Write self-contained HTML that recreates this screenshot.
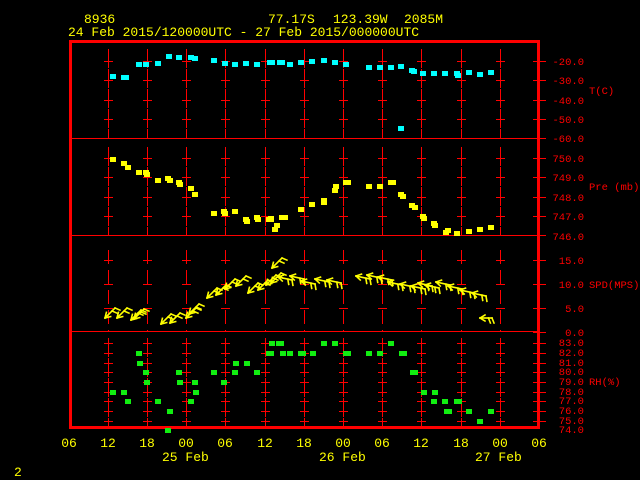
<!DOCTYPE html>
<html><head><meta charset="utf-8"><style>
html,body{margin:0;padding:0;background:#000;width:640px;height:480px;overflow:hidden}
svg{display:block}
text{font-family:"Liberation Mono",monospace}
.y{fill:#ffff00;font-size:13px}
.r{fill:#ff0000;font-size:10.5px}
</style></head><body>
<svg id="s" width="640" height="480" xmlns="http://www.w3.org/2000/svg">
<rect width="640" height="480" fill="#000"/>
<g id="g"></g>
<text class="y" x="84" y="23">8936</text>
<text class="y" x="268" y="23">77.17S</text>
<text class="y" x="333" y="23">123.39W</text>
<text class="y" x="404" y="23">2085M</text>
<text class="y" x="68" y="36">24 Feb 2015/120000UTC - 27 Feb 2015/000000UTC</text>
<g class="y" text-anchor="middle">
<text x="69" y="447">06</text><text x="108" y="447">12</text><text x="147" y="447">18</text><text x="186" y="447">00</text>
<text x="225" y="447">06</text><text x="265" y="447">12</text><text x="304" y="447">18</text><text x="343" y="447">00</text>
<text x="382" y="447">06</text><text x="421" y="447">12</text><text x="461" y="447">18</text><text x="500" y="447">00</text><text x="539" y="447">06</text>
</g>
<text class="y" x="162" y="461">25 Feb</text>
<text class="y" x="319" y="461">26 Feb</text>
<text class="y" x="475" y="461">27 Feb</text>
<text class="y" x="14" y="476">2</text>
<g class="r" text-anchor="end">
<text x="584" y="65">-20.0</text><text x="584" y="84">-30.0</text><text x="584" y="104">-40.0</text><text x="584" y="123">-50.0</text><text x="584" y="142">-60.0</text>
<text x="584" y="162">750.0</text><text x="584" y="181">749.0</text><text x="584" y="201">748.0</text><text x="584" y="220">747.0</text><text x="584" y="240">746.0</text>
<text x="584" y="264">15.0</text><text x="584" y="288">10.0</text><text x="584" y="312">5.0</text><text x="584" y="336">0.0</text>
<text x="584" y="346">83.0</text><text x="584" y="356">82.0</text><text x="584" y="366">81.0</text><text x="584" y="375">80.0</text><text x="584" y="385">79.0</text>
<text x="584" y="395">78.0</text><text x="584" y="404">77.0</text><text x="584" y="414">76.0</text><text x="584" y="424">75.0</text><text x="584" y="433">74.0</text>
</g>
<g class="r">
<text x="589" y="94">T(C)</text><text x="589" y="190">Pre (mb)</text><text x="589" y="288">SPD(MPS)</text><text x="589" y="385">RH(%)</text>
</g>
</svg>
<script>
var g=document.getElementById('g'),NS='http://www.w3.org/2000/svg';
function el(t,a){var e=document.createElementNS(NS,t);for(var k in a)e.setAttribute(k,a[k]);g.appendChild(e);return e;}
var R='#ff0000',cols=[108,147,186,225,265,304,343,382,421,461,500];
function rc(x,y,w,h,c){el('rect',{x:x,y:y,width:w,height:h,fill:c||R,'shape-rendering':'crispEdges'});}
function vd(x,y1,y2,d,gp){for(var y=y1;y<y2;y+=d+gp)rc(x,y,1,Math.min(d,y2-y));}
cols.forEach(function(x){
 vd(x,49,138,19,1);
 vd(x,147,236,19,1);
 vd(x,250,332,14,6);
 vd(x,338,427,19,1);
});
var ty=[61,80,100,119,158,177,197,216,260,284,308,343,353,363,372,382,392,401,411,421];
ty.forEach(function(y){cols.forEach(function(x){rc(x-4,y,9,1);});rc(533,y,13,1);});
rc(70,138,469,1);rc(70,235,469,1);rc(70,331,469,1);
rc(533,138,13,1);rc(533,235,13,1);rc(533,332,13,1);
rc(69,40,471,3);rc(69,426,471,3);rc(69,40,3,389);rc(537,40,3,389);
function pts(a,c){a.forEach(function(p){rc(p[0]-3,p[1]-2,p[2]?8:6,5,c);});}
pts([[113,76],[124,77,1],[139,64],[146,64],[158,63],[169,56],[179,57],[191,57],[195,58],[214,60],[225,63],[235,64],[246,63],[257,64],[270,62,1],[280,62,1],[290,64],[301,62],[312,61],[324,60],[335,62],[346,64],[369,67],[380,67],[391,67],[401,66],[412,70],[414,71],[423,73],[434,73],[445,73],[457,73],[458,75],[469,72],[480,74],[491,72],[401,128]],'#00ffff');
pts([[113,159],[124,163],[128,167],[139,172],[146,172],[147,174],[158,180],[168,178],[170,180],[179,182],[180,184],[191,188],[195,194],[214,213],[224,211],[225,213],[235,211],[246,219],[247,221],[257,217],[258,219],[269,219,1],[271,218],[275,229],[277,225],[282,217],[285,217],[301,209],[312,204],[324,202],[324,200],[335,190],[336,186],[346,182,1],[369,186],[380,186],[391,182,1],[401,194],[403,196],[412,205],[415,207],[423,216],[424,218],[434,223],[435,225],[446,232],[448,230],[457,233],[469,231],[480,229],[491,227]],'#ffff00');
pts([[113,392],[124,392],[128,401],[139,353],[140,363],[146,372],[147,382],[158,401],[170,411],[168,430],[179,372],[180,382],[191,401],[195,382],[196,392],[214,372],[224,382],[235,372],[236,363],[247,363],[257,372],[269,353,1],[272,343],[279,343,1],[283,353],[290,353],[301,353,1],[313,353],[324,343],[335,343],[346,353,1],[369,353],[380,353],[391,343],[402,353,1],[413,372,1],[424,392],[435,392],[434,401],[445,401],[447,411,1],[457,401,1],[469,411],[480,421],[491,411]],'#11ee11');
var Y='#ffff00';
function ln(x1,y1,x2,y2){el('line',{x1:x1,y1:y1,x2:x2,y2:y2,stroke:Y,'stroke-width':1.6,'stroke-linecap':'square'});}
function arrow(x,y,dx,dy){var L=Math.sqrt(dx*dx+dy*dy),ux=dx/L,uy=dy/L;
 ln(x,y,x+dx,y+dy);
 ln(x,y,x+ux*5-uy*3,y+uy*5+ux*3);ln(x,y,x+ux*5+uy*3,y+uy*5-ux*3);
 ln(x+dx,y+dy,x+dx-uy*5+ux*2,y+dy+ux*5+uy*2);ln(x+dx*.7,y+dy*.7,x+dx*.7-uy*5+ux*2,y+dy*.7+ux*5+uy*2);}
[[105,318],[117,318],[131,320],[134,319],[161,324],[170,323],[186,318],[189,314],[207,298],[216,295],[225,289],[236,286],[248,293],[258,290],[266,285],[271,283],[272,268]].forEach(function(p){arrow(p[0],p[1],10,-10);});
[[278,277],[290,276],[301,281],[315,279],[327,280],[356,276],[367,275],[378,277],[388,282],[400,284],[411,286],[418,283],[425,285],[436,282],[448,286],[460,290],[472,293]].forEach(function(p){arrow(p[0],p[1],14,3);});
arrow(480,318,12,0);
</script>
</body></html>
